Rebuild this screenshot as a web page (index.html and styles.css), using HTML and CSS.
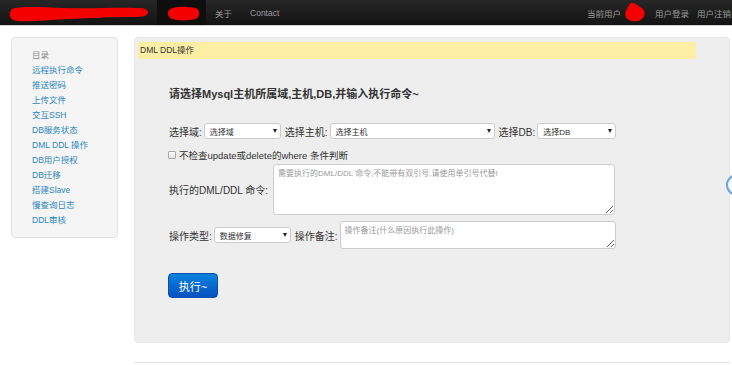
FILE: index.html
```html
<!DOCTYPE html>
<html lang="zh">
<head>
<meta charset="utf-8">
<title>DML DDL操作</title>
<link rel="stylesheet" href="styles.css">
</head>
<body>
<header class="navbar">
  <div class="nav-left">
    <span class="brand">
      <svg width="140" height="22" viewBox="0 0 140 22"><path d="M3 7 C10 4 30 5 55 6 C80 7 110 5 128 6 C136 6 140 8 139 11 C138 14 134 15 125 15 C100 15 80 16 60 17 C40 18 20 20 8 19 C2 18 0 15 1 11 C1 9 2 8 3 7 Z" fill="#f40000"/></svg>
    </span>
    <span class="nav-item active">
      <svg width="34" height="18" viewBox="0 0 34 18"><path d="M2 6 C6 3 14 2 22 3 C28 3 33 4 33 8 C34 12 31 16 26 16 C18 17 10 17 5 15 C1 14 0 9 2 6 Z" fill="#f40000"/></svg>
    </span>
    <a class="nav-item">关于</a>
    <a class="nav-item">Contact</a>
  </div>
  <div class="nav-right">
    <span class="user">当前用户<svg class="blob" width="22" height="22" viewBox="0 0 22 22"><path d="M7 1 C10 0 13 3 16 5 C21 7 22 12 19 16 C16 20 9 20 5 18 C1 16 0 11 3 7 C4 5 5 2 7 1 Z" fill="#f40000"/></svg></span>
    <a class="nav-link">用户登录</a>
    <a class="nav-link">用户注销</a>
  </div>
</header>

<div class="layout">
  <aside class="sidebar">
    <div class="side-title">目录</div>
    <a class="side-link">远程执行命令</a>
    <a class="side-link">推送密码</a>
    <a class="side-link">上传文件</a>
    <a class="side-link">交互SSH</a>
    <a class="side-link">DB服务状态</a>
    <a class="side-link">DML DDL 操作</a>
    <a class="side-link">DB用户授权</a>
    <a class="side-link">DB迁移</a>
    <a class="side-link">搭建Slave</a>
    <a class="side-link">慢查询日志</a>
    <a class="side-link">DDL审核</a>
  </aside>

  <main class="content">
    <section class="panel">
      <div class="panel-head">DML DDL操作</div>
      <div class="form">
        <h3 class="form-title">请选择Mysql主机所属域,主机,DB,并输入执行命令~</h3>
        <div class="row row-selects">
          <label class="lbl">选择域:</label>
          <div class="select w-domain"><span>选择域</span><i class="caret"></i></div>
          <label class="lbl">选择主机:</label>
          <div class="select w-host"><span>选择主机</span><i class="caret"></i></div>
          <label class="lbl">选择DB:</label>
          <div class="select w-db"><span>选择DB</span><i class="caret"></i></div>
        </div>
        <div class="row row-check">
          <span class="check"></span>
          <span class="check-text">不检查update或delete的where 条件判断</span>
        </div>
        <div class="row row-sql">
          <label class="lbl">执行的DML/DDL 命令:</label>
          <textarea class="ta ta-sql" placeholder="需要执行的DML/DDL 命令,不能带有双引号,请使用单引号代替!"></textarea>
        </div>
        <div class="row row-type">
          <label class="lbl">操作类型:</label>
          <div class="select w-type"><span>数据修复</span><i class="caret"></i></div>
          <label class="lbl">操作备注:</label>
          <textarea class="ta ta-note" placeholder="操作备注(什么原因执行此操作)"></textarea>
        </div>
        <button class="btn">执行~</button>
      </div>
    </section>
    <section class="panel-next"></section>
  </main>
</div>
<div class="float-ring"></div>
</body>
</html>
```

FILE: styles.css
```css
* { box-sizing: border-box; margin: 0; padding: 0; }
html, body { width: 732px; height: 365px; overflow: hidden; }
body {
  font-family: "Liberation Sans", "Noto Sans CJK SC", sans-serif;
  background: #fff;
  color: #333;
}

/* navbar */
.navbar {
  height: 26px;
  display: flex;
  justify-content: space-between;
  background: linear-gradient(#262626, #141414);
  border-bottom: 1px solid #cfcfcf;
  font-size: 8.5px;
  color: #9a9a9a;
}
.nav-left { display: flex; align-items: stretch; padding-left: 9px; }
.brand { display: flex; align-items: center; width: 148px; }
.nav-item { display: flex; align-items: center; padding: 0 9px; color: #9a9a9a; }
.nav-item.active { background: #0e0e0e; padding: 0 6px 0 10px; width: 49px; }
.nav-right { display: flex; align-items: center; gap: 8px; padding-right: 1px; }
.user { display: flex; align-items: center; gap: 3px; }
.blob { margin-right: 1px; }
.nav-link { color: #9a9a9a; }

/* layout */
.layout { display: flex; padding: 11px 0 0 11px; gap: 16px; }

.sidebar {
  width: 107px;
  height: 201px;
  flex: none;
  background: #f5f5f5;
  border: 1px solid #e3e3e3;
  border-radius: 4px;
  padding: 10px 0 0 20px;
  display: flex;
  flex-direction: column;
  font-size: 8.5px;
  line-height: 15px;
}
.side-title { color: #888; }
.side-link { color: #2c85c0; }

.content { width: 596px; flex: none; display: flex; flex-direction: column; }
.panel {
  height: 306px;
  background: #eeeeee;
  border: 1px solid #e6e6e6;
  border-radius: 4px;
  padding: 4px 0 0 3px;
}
.panel-head {
  width: 558px;
  height: 17px;
  background: #fdeea6;
  font-size: 8.5px;
  line-height: 17px;
  padding-left: 2px;
  color: #333;
}
.form { padding-left: 31px; }
.form-title {
  margin-top: 27px;
  font-size: 11px;
  line-height: 16px;
  font-weight: bold;
  color: #333;
}
.row { display: flex; align-items: center; }
.lbl { font-size: 10px; color: #333; }
.row-selects { margin-top: 21px; height: 16px; }
.row-selects .lbl { margin-right: 2px; }
.select {
  height: 16px;
  background: #fff;
  border: 1px solid #ccc;
  border-radius: 3px;
  display: flex;
  align-items: center;
  justify-content: space-between;
  padding: 0 3px 0 5px;
  font-size: 8px;
  color: #333;
  margin-right: 4px;
}
.caret {
  width: 0; height: 0;
  border-left: 2px solid transparent;
  border-right: 2px solid transparent;
  border-top: 4px solid #222;
}
.w-domain { width: 77px; }
.w-host { width: 165px; }
.w-db { width: 79px; }
.w-type { width: 77px; }

.row-check { margin-top: 10px; height: 12px; }
.check {
  width: 8px; height: 8px;
  border: 1px solid #a8a8a8;
  border-radius: 1px;
  background: linear-gradient(#fff, #e2e2e2);
  margin: 0 3px 0 -1px;
}
.check-text { font-size: 9.5px; color: #333; }

.row-sql { margin-top: 3px; }
.row-sql .lbl { margin-right: 5px; }
.ta {
  background: #fff;
  border: 1px solid #ccc;
  border-radius: 3px;
  font-family: "Liberation Sans", "Noto Sans CJK SC", sans-serif;
  font-size: 8px;
  padding: 2px 4px;
  color: #333;
}
.ta::placeholder { color: #999; }
.ta-sql { width: 342px; height: 51px; }

.row-type { margin-top: 6px; }
.row-type .lbl { margin-right: 2px; }
.ta-note { width: 276px; height: 28px; }

.btn {
  margin-top: 24px;
  margin-left: -1px;
  width: 50px;
  height: 25px;
  border: 1px solid #0a4fb0;
  border-radius: 4px;
  background: linear-gradient(#0a82dc, #0552c2);
  color: #fff;
  font-family: "Liberation Sans", "Noto Sans CJK SC", sans-serif;
  font-size: 11px;
}

.panel-next {
  margin-top: 19px;
  height: 20px;
  border-top: 1px solid #e3e3e3;
  background: #fdfdfd;
}

.float-ring {
  position: absolute;
  left: 726px;
  top: 174px;
  width: 22px;
  height: 22px;
  border-radius: 50%;
  border: 2px solid #6aa6d8;
  background: #f4f8fc;
}
```
